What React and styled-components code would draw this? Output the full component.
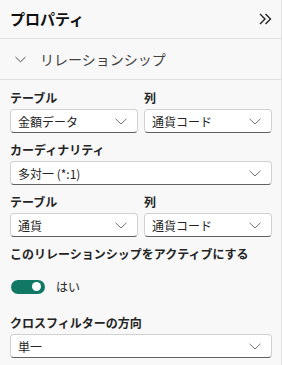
import React, { useState } from 'react';
import styled, { createGlobalStyle } from 'styled-components';

const Global = createGlobalStyle`
  html, body { margin: 0; padding: 0; background: #f8f8f8; }
  * { box-sizing: border-box; }
  body {
    font-family: "Noto Sans CJK JP", "Noto Sans", sans-serif;
    color: #242424;
  }
`;

const Panel = styled.div`
  width: 282px;
  height: 365px;
  background: #f8f8f8;
  border-right: 1px solid #e0e0e0;
  overflow: hidden;
`;

const Header = styled.div`
  height: 39px;
  display: flex;
  align-items: center;
  justify-content: space-between;
  padding: 0 8px 0 10px;
  border-bottom: 1px solid #e0e0e0;
`;

const Title = styled.div`
  font-size: 15px;
  font-weight: 700;
  line-height: 20px;
  color: #111;
`;

const IconBtn = styled.div`
  width: 16px;
  height: 16px;
  display: flex;
  align-items: center;
  justify-content: center;
`;

const Section = styled.div`
  height: 41px;
  display: flex;
  align-items: center;
  gap: 14px;
  padding: 0 0 0 15px;
  border-bottom: 1px solid #e0e0e0;
  font-size: 14px;
  color: #424242;
`;

const Body = styled.div`
  padding: 8px 9px 0 10px;
  display: flex;
  flex-direction: column;
  gap: 7px;
`;

const Row = styled.div`
  display: grid;
  grid-template-columns: 1fr 1fr;
  gap: 6px;
`;

const Field = styled.div`
  display: flex;
  flex-direction: column;
  gap: 1px;
`;

const Label = styled.div`
  font-size: 12px;
  font-weight: 700;
  line-height: 20px;
  color: #242424;
  white-space: nowrap;
`;

const Select = styled.div`
  height: 24px;
  background: #fff;
  border: 1px solid #d1d1d1;
  border-bottom-color: #616161;
  border-radius: 4px;
  display: flex;
  align-items: center;
  justify-content: space-between;
  padding: 1px 10px 0 7px;
  font-size: 12px;
  color: #242424;
`;

const ToggleRow = styled.div`
  display: flex;
  align-items: center;
  gap: 11px;
  margin-top: 13px;
  margin-bottom: 11px;
  font-size: 12px;
  color: #242424;
  padding-left: 1px;
`;

const Track = styled.div`
  width: 34px;
  height: 14px;
  border-radius: 7px;
  background: ${p => (p.$on ? '#117865' : '#fff')};
  border: ${p => (p.$on ? 'none' : '1px solid #616161')};
  display: flex;
  align-items: center;
  justify-content: ${p => (p.$on ? 'flex-end' : 'flex-start')};
  padding: 0 4px;
  cursor: pointer;
`;

const Knob = styled.div`
  width: 9px;
  height: 9px;
  border-radius: 50%;
  background: ${p => (p.$on ? '#fff' : '#616161')};
`;

const Chevron = ({ color = '#616161', w = 12 }) => (
  <svg width={w} height="7" viewBox="0 0 12 7" fill="none">
    <path d="M0.5 0.8 L6 6 L11.5 0.8" stroke={color} strokeWidth="1" />
  </svg>
);

const DoubleChevron = () => (
  <svg width="13" height="12" viewBox="0 0 13 12" fill="none">
    <path d="M1 1 L6 6 L1 11" stroke="#242424" strokeWidth="1.4" />
    <path d="M6.5 1 L11.5 6 L6.5 11" stroke="#242424" strokeWidth="1.4" />
  </svg>
);

const Dropdown = ({ value }) => (
  <Select>
    <span>{value}</span>
    <Chevron color="#707070" />
  </Select>
);

export default function App() {
  const [active, setActive] = useState(true);
  return (
    <Panel>
      <Global />
      <Header>
        <Title>プロパティ</Title>
        <IconBtn><DoubleChevron /></IconBtn>
      </Header>
      <Section>
        <Chevron w={11} color="#424242" />
        <span>リレーションシップ</span>
      </Section>
      <Body>
        <Row>
          <Field>
            <Label>テーブル</Label>
            <Dropdown value="金額データ" />
          </Field>
          <Field>
            <Label>列</Label>
            <Dropdown value="通貨コード" />
          </Field>
        </Row>
        <Field>
          <Label>カーディナリティ</Label>
          <Dropdown value="多対一 (*:1)" />
        </Field>
        <Row>
          <Field>
            <Label>テーブル</Label>
            <Dropdown value="通貨" />
          </Field>
          <Field>
            <Label>列</Label>
            <Dropdown value="通貨コード" />
          </Field>
        </Row>
        <Field>
          <Label>このリレーションシップをアクティブにする</Label>
          <ToggleRow>
            <Track $on={active} onClick={() => setActive(!active)}>
              <Knob $on={active} />
            </Track>
            <span>{active ? 'はい' : 'いいえ'}</span>
          </ToggleRow>
        </Field>
        <Field>
          <Label>クロスフィルターの方向</Label>
          <Dropdown value="単一" />
        </Field>
      </Body>
    </Panel>
  );
}
